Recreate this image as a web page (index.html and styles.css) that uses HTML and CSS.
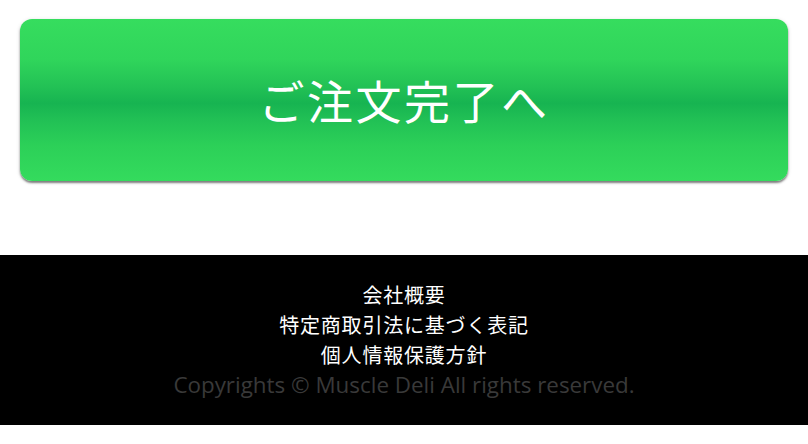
FILE: index.html
```html
<!DOCTYPE html>
<html lang="ja">
<head>
<meta charset="utf-8">
<link rel="stylesheet" href="styles.css">
</head>
<body>
<main class="main">
  <a class="cta" href="#">ご注文完了へ</a>
</main>
<footer class="footer">
  <ul class="links">
    <li><a href="#">会社概要</a></li>
    <li><a href="#">特定商取引法に基づく表記</a></li>
    <li><a href="#">個人情報保護方針</a></li>
  </ul>
  <p class="copy">Copyrights © Muscle Deli All rights reserved.</p>
</footer>
</body>
</html>
```
FILE: styles.css
```css
html, body {
  margin: 0;
  padding: 0;
  background: #fff;
}
.main {
  padding: 19px 20px 0;
  height: 255px;
  box-sizing: border-box;
}
.cta {
  display: flex;
  align-items: center;
  justify-content: center;
  height: 162px;
  border-radius: 12px;
  background: linear-gradient(to bottom, #36dd5e 0%, #30d55b 25%, #22c155 42%, #17b451 52%, #21c055 62%, #2cd058 78%, #34db5d 100%);
  box-shadow: 0 2px 2px rgba(0,0,0,0.45), 0 1px 4px rgba(0,0,0,0.15);
  color: #fff;
  text-decoration: none;
  font-family: "Noto Sans CJK JP", sans-serif;
  font-size: 46px;
  font-weight: 400;
  letter-spacing: 2.5px;
  padding-left: 0;
  padding-bottom: 2px;
  box-sizing: border-box;
}
.footer {
  background: #000;
  height: 170px;
  box-sizing: border-box;
  padding-top: 25px;
  text-align: center;
}
.links {
  list-style: none;
  margin: 0;
  padding: 0;
}
.links li {
  line-height: 30px;
  height: 30px;
}
.links a {
  color: #fff;
  text-decoration: none;
  font-family: "Noto Sans CJK JP", sans-serif;
  font-size: 20px;
  letter-spacing: 0.8px;
}
.copy {
  margin: 0;
  line-height: 30px;
  color: #393939;
  font-family: "Open Sans", "Noto Sans", sans-serif;
  font-size: 22.4px;
}
```
